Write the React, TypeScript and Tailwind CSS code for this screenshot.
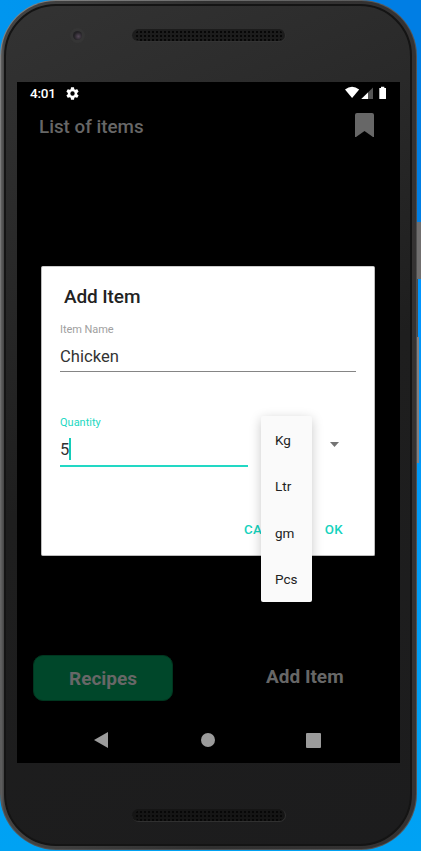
import React from "react";

function Speaker({ dark = false }: { dark?: boolean }) {
  return (
    <div
      className={`h-[13px] w-[154px] rounded-full border-b border-r pl-[3px] pr-[2px] pt-[1px] ${
        dark ? "border-[#303030] bg-[#151515]" : "border-[#333333] bg-[#1c1c1c]"
      }`}
    >
      <div className="h-[11px] w-full rounded-full bg-[radial-gradient(circle,#070707_0.8px,transparent_1.4px)] bg-[length:4px_4px]" />
    </div>
  );
}

function StatusBar() {
  return (
    <div className="flex h-[22px] items-center pl-[13px] pr-[13px] text-white">
      <span className="w-[26px] pt-[1px] text-[13.500px] font-medium leading-none tracking-[-0.200px]">4:01</span>
      <svg className="ml-[9px]" width="15" height="15" viewBox="0 0 24 24" fill="currentColor">
        <path d="M19.400 13a7.800 7.800 0 0 0 0-2l2.100-1.650a.5.5 0 0 0 .12-.64l-2-3.460a.5.5 0 0 0-.61-.22l-2.490 1a7.300 7.300 0 0 0-1.690-.98l-.38-2.650A.49.49 0 0 0 14 2h-4a.49.49 0 0 0-.49.42l-.38 2.650c-.61.25-1.170.59-1.690.98l-2.490-1a.49.49 0 0 0-.61.22l-2 3.460a.5.5 0 0 0 .12.64L4.570 11a7.900 7.900 0 0 0 0 2l-2.110 1.650a.5.5 0 0 0-.12.64l2 3.460c.12.22.39.3.61.22l2.490-1c.52.4 1.080.73 1.690.98l.38 2.650c.03.24.24.42.49.42h4c.25 0 .46-.18.49-.42l.38-2.650c.61-.25 1.170-.59 1.690-.98l2.490 1c.23.09.49 0 .61-.22l2-3.460a.5.5 0 0 0-.12-.64zM12 15.500a3.500 3.500 0 1 1 0-7 3.500 3.500 0 0 1 0 7z" />
      </svg>
      <svg className="ml-auto" width="42" height="14" viewBox="0 0 42 14" fill="currentColor">
        <path d="M0 3.500Q7 -1.800 14.200 3.500L7.100 12z" />
        <path d="M16.300 13L28 1.500V13z" fill="#555" />
        <path d="M16.300 13L23 6.400V13z" />
        <path d="M34.300 2h1.700V.8h3.300V2h1.700V12.500q0 .5-.5.5h-5.700q-.5 0-.5-.5z" />
      </svg>
    </div>
  );
}

function AddItemDialog() {
  return (
    <section className="ml-[24px] flex h-[290px] w-[334px] flex-col rounded-[2px] border border-[#bdbdbd] border-t-[#cccccc] bg-white pl-[18px] pr-[18px] text-[#222]">
      <h2 className="mt-[18px] pl-[4px] text-[19px] font-medium leading-6 tracking-[-0.100px]">Add Item</h2>
      <label className="mt-[14px] text-[11px] leading-[14px] tracking-[-0.060px] text-[#a0a0a0]">Item Name</label>
      <div className="mt-[8px] h-[27px] border-b border-[#858585] text-[16.600px] leading-[24px] text-[#333]">Chicken</div>
      <div className="mt-[44px] flex items-start">
        <div className="w-[188px]">
          <label className="block text-[11px] leading-[14px] text-[#22d8c2]">Quantity</label>
          <div className="mt-[7px] flex h-[30px] border-b-[2.500px] border-[#22d8c4] text-[16.500px] leading-[25px] text-[#333]">
            5<span className="mt-[1px] h-[22px] w-[1.500px] bg-[#14cdb9]" />
          </div>
        </div>
        <div className="relative ml-[12px] h-[52px] w-[96px]">
          <svg className="ml-[70px] mt-[26px]" width="9" height="5" viewBox="0 0 9 5">
            <path d="M0 0h9L4.500 5z" fill="#747474" />
          </svg>
          <ul className="absolute left-[0.500px] top-0 z-10 h-[186px] w-[51.500px] rounded-[2px] bg-[#fafafa] pl-[14.500px] pt-[1px] text-[13.500px] text-[#222] shadow-[0_3px_12px_rgba(0,0,0,0.22)]">
            <li className="flex h-[46.300px] items-center">Kg</li>
            <li className="flex h-[46.300px] items-center">Ltr</li>
            <li className="flex h-[46.300px] items-center">gm</li>
            <li className="flex h-[46.300px] items-center">Pcs</li>
          </ul>
        </div>
      </div>
      <div className="mt-auto flex h-[51px] items-center justify-end gap-[28px] pr-[13px] text-[13.300px] font-medium tracking-[0.400px] text-[#14d2bd]">
        <button>CANCEL</button>
        <button>OK</button>
      </div>
    </section>
  );
}

function Screen() {
  return (
    <main className="flex h-[681px] w-[383px] flex-col bg-black">
      <StatusBar />
      <header className="flex h-[48px] items-start justify-between pl-[22px] pr-[26px] text-[#676767]">
        <h1 className="mt-[14px] text-[18.800px] font-medium leading-none">List of items</h1>
        <svg className="mt-[9px]" width="19" height="24" viewBox="0 0 19 24" fill="currentColor">
          <path d="M2 0h15q2 0 2 2v22h-1l-8.500-6L1 24H0V2q0-2 2-2z" />
        </svg>
      </header>
      <div className="mt-[114px]">
        <AddItemDialog />
      </div>
      <div className="mt-[99px] flex items-start font-bold text-[#676767]">
        <button className="ml-[16px] h-[46px] w-[140px] rounded-[10px] border border-[#00361f] bg-[#00472a] pt-[2px] text-[19px]">Recipes</button>
        <button className="ml-[93px] h-[44px] text-[19px]">Add Item</button>
      </div>
      <nav className="mt-[16px] flex h-[46px] items-center text-[#9b9b9b]">
        <svg className="ml-[77px]" width="14" height="16" viewBox="0 0 14 16" fill="currentColor">
          <path d="M0 8L14 0v16z" />
        </svg>
        <span className="ml-[93px] size-[14px] rounded-full bg-current" />
        <span className="ml-[91px] size-[15px] rounded-[1px] bg-current" />
      </nav>
    </main>
  );
}

export default function App() {
  return (
    <div className="flex h-[851px] w-[421px] overflow-hidden bg-[linear-gradient(90deg,#0096ef_0%,#0090ed_50%,#007ee4_51%,#007ee4_100%)] font-[Roboto,sans-serif]">
      <div className="flex h-full w-full bg-[linear-gradient(180deg,transparent_0%,transparent_30%,#0098f8_50%,#00a2f3_100%)]">
        <div className="h-[850px] w-[417px] shrink-0 rounded-[56px] bg-[linear-gradient(115deg,#858585_0%,#606060_40%,#4d4d4d_60%,#555_100%)] p-[1px]">
          <div className="h-full w-full rounded-[55px] bg-[linear-gradient(90deg,#626262_0px,#444_3px,#303030_50%,#343232_100%)] pb-[3px] pl-[3px] pr-[4px] pt-[3px]">
            <div className="h-full rounded-[52px] border-2 border-[#141414] bg-[linear-gradient(155deg,#333333_0%,#292929_25%,#1e1e1e_50%,#1c1c1d_100%)] pl-[11px]">
              <div className="-ml-[11px] flex h-[76px] pt-[20px]">
                <div className="ml-[64px] mt-[2px] flex size-[15px] items-center justify-center rounded-full bg-[#353535]">
                  <span className="size-[9px] rounded-full bg-[radial-gradient(circle_at_60%_60%,#544857_0%,#242226_55%,#1c1c1c_100%)]" />
                </div>
                <div className="ml-[47px] mt-[3px]">
                  <Speaker />
                </div>
              </div>
              <Screen />
              <div className="-ml-[11px] flex pl-[126px] pt-[46px]">
                <Speaker dark />
              </div>
            </div>
          </div>
        </div>
        <div className="flex flex-col">
          <div className="h-[222px] w-[4px] bg-[#007ee4]" />
          <div className="h-[57px] w-[4px] bg-[#706e6e]" />
          <div className="h-[58px] w-[4px] border-l border-[#4d4d4d] bg-[#0095ff]" />
          <div className="h-[126px] w-[4px] border-l-2 border-[#858080] bg-[#0095f8]" />
        </div>
      </div>
    </div>
  );
}
